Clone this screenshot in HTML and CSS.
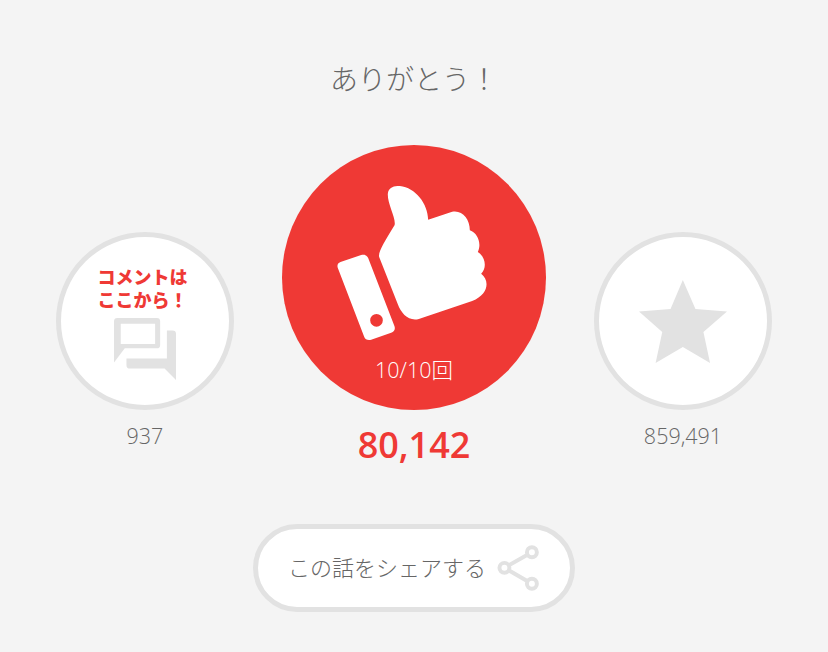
FILE: index.html
```html
<!DOCTYPE html>
<html lang="ja">
<head>
    <meta charset="UTF-8">
    <meta name="viewport" content="width=device-width, initial-scale=1.0">
    <title>ありがとう！</title>
    <link rel="stylesheet" href="styles.css">
</head>
<body>
    <h1 class="thanks-title">ありがとう！</h1>

    <div class="action-row">
        <div class="action">
            <div class="circle-slot">
                <a class="circle circle-comment" href="#">
                    <span class="comment-label">コメントは<br>ここから！</span>
                    <svg class="comment-icon" viewBox="193 283 184 184">
                        <path fill-rule="evenodd" d="M203 283H320a10 10 0 0 1 10 10V363a10 10 0 0 1-10 10H225L193 415V293a10 10 0 0 1 10-10ZM213 300V360H315V300Z"/>
                        <path d="M350 320H367a10 10 0 0 1 10 10V467L343 433H240a10 10 0 0 1-10-10V403H350Z"/>
                    </svg>
                </a>
            </div>
            <span class="count">937</span>
        </div>

        <div class="action">
            <div class="circle-slot">
                <a class="circle circle-like" href="#">
                    <svg class="like-icon" viewBox="200 137 464 465">
                        <path d="M352 160C354 142 370 136 388 137C435 142 472 190 473 238L545 214C575 208 598 235 598 270C622 278 634 310 622 335C645 350 650 382 632 400C658 420 655 462 605 482L445 536C415 544 392 520 382 492L326 350C322 335 345 300 372 255C378 235 350 190 352 160Z"/>
                        <path fill-rule="evenodd" d="M210 365L272 344C282 341 290 345 293 353L372 558C375 567 371 574 362 577L302 598C292 601 284 597 281 589L202 383C199 375 202 368 210 365ZM318 521A19 19 0 1 0 318 559A19 19 0 1 0 318 521Z"/>
                    </svg>
                    <span class="like-progress">10/10回</span>
                </a>
            </div>
            <span class="count-like">80,142</span>
        </div>

        <div class="action">
            <div class="circle-slot">
                <a class="circle circle-star" href="#">
                    <svg class="star-icon" viewBox="160 165 265 250">
                        <path d="M292 165L330 252L425 260L354 322L374 415L292 367L210 415L230 322L160 260L255 252Z"/>
                    </svg>
                </a>
            </div>
            <span class="count">859,491</span>
        </div>
    </div>

    <a class="share-button" href="#">
        <span class="share-text">この話をシェアする</span>
        <svg class="share-icon" viewBox="755 90 135 145">
            <path class="share-line" d="M780 162L863 115M780 162L863 210"/>
            <circle class="share-dot" cx="863" cy="115" r="15"/>
            <circle class="share-dot" cx="863" cy="210" r="15"/>
            <circle class="share-dot" cx="780" cy="162" r="15"/>
        </svg>
    </a>
</body>
</html>
```

FILE: styles.css
```css
body {
    font-family: "Open Sans", "Noto Sans CJK JP", sans-serif;
    background-color: #f4f4f4;
    color: #666;
    margin: 0;
    padding-top: 59px;
    display: flex;
    flex-direction: column;
    align-items: center;
}

a {
    text-decoration: none;
    color: inherit;
}

.thanks-title {
    font-family: "Noto Sans CJK JP", sans-serif;
    font-size: 28px;
    font-weight: 300;
    line-height: 38px;
    margin: 0 0 48px;
}

.action-row {
    display: flex;
    align-items: flex-start;
    gap: 48px;
}

.action {
    display: flex;
    flex-direction: column;
    align-items: center;
}

.circle-slot {
    height: 265px;
    display: flex;
    align-items: flex-end;
}

.circle {
    box-sizing: border-box;
    display: flex;
    flex-direction: column;
    align-items: center;
    border-radius: 50%;
}

.circle-comment,
.circle-star {
    width: 178px;
    height: 178px;
    background-color: #fff;
    border: 5px solid #e2e2e2;
}

.circle-star {
    justify-content: center;
}

.circle-like {
    width: 264px;
    height: 265px;
    background-color: #ef3935;
    color: #fff;
    padding-top: 41px;
}

.comment-label {
    font-family: "Noto Sans CJK JP", sans-serif;
    font-size: 18px;
    font-weight: 900;
    line-height: 23px;
    color: #ef3935;
    margin-top: 28px;
    margin-right: 5px;
}

.comment-icon {
    width: 62px;
    height: 62px;
    fill: #e2e2e2;
    margin-top: 7px;
}

.like-icon {
    width: 155px;
    height: 155px;
    fill: #fff;
}

.like-progress {
    font-size: 21.5px;
    font-weight: 300;
    line-height: 26px;
    margin-top: 16px;
}

.star-icon {
    width: 88px;
    height: 83px;
    fill: #e2e2e2;
}

.count {
    font-size: 21.5px;
    font-weight: 300;
    line-height: 26px;
    margin-top: 13px;
}

.count-like {
    font-size: 36px;
    font-weight: 600;
    line-height: 44px;
    color: #ef3935;
    margin-top: 13px;
}

.share-button {
    box-sizing: border-box;
    width: 322px;
    height: 88px;
    margin-top: 57px;
    background-color: #fff;
    border: 5px solid #e2e2e2;
    border-radius: 44px;
    display: flex;
    align-items: center;
    padding-left: 30px;
    gap: 10px;
}

.share-text {
    font-family: "Noto Sans CJK JP", sans-serif;
    font-size: 22px;
    font-weight: 300;
    margin-bottom: 5px;
}

.share-icon {
    width: 45px;
    height: 48px;
}

.share-line {
    fill: none;
    stroke: #e2e2e2;
    stroke-width: 12;
}

.share-dot {
    fill: #fff;
    stroke: #e2e2e2;
    stroke-width: 12;
}
```
